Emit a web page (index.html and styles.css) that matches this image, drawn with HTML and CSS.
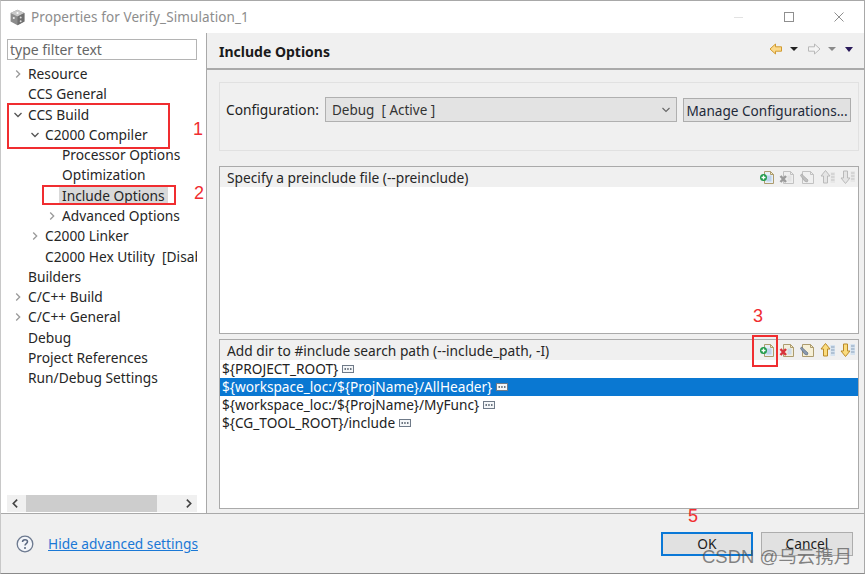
FILE: index.html
```html
<!DOCTYPE html>
<html lang="en">
<head>
<meta charset="utf-8">
<title>Properties for Verify_Simulation_1</title>
<link rel="stylesheet" href="styles.css">
</head>
<body>
<svg class="defs" width="0" height="0" aria-hidden="true">
  <symbol id="add" viewBox="0 0 16 16"><path d="M5.500 2.500h6l3 3v9h-9z" fill="#e6eef6" stroke="#ad9c6e"/><path d="M11.500 2.500v3h3z" fill="#f8eec8" stroke="#ad9c6e"/><path d="M7.500 6.500h5v6h-5z" fill="#bcd3ea"/><circle cx="4.500" cy="8.500" r="3.500" fill="#1f9a4a"/><path d="M2.500 8.500h4M4.500 6.500v4" stroke="#fff" stroke-width="1.300"/></symbol>
  <symbol id="del" viewBox="0 0 16 16"><path d="M4.500 2.500h7l3 3v9h-10z" fill="#f2eedd" stroke="#ad9c6e"/><path d="M11.500 2.500v3h3z" fill="#f8eec8" stroke="#ad9c6e"/><path d="M8.500 6.500h4v6h-4z" fill="#cfdcea"/><path d="M1.500 7l5.500 6M7 7l-5.500 6" stroke="#d8343c" stroke-width="2.500"/></symbol>
  <symbol id="edit" viewBox="0 0 16 16"><path d="M3.500 2.500h8l3 3v9h-11z" fill="#f6f0d8" stroke="#ad9c6e"/><path d="M11.500 2.500v3h3z" fill="#f8eec8" stroke="#ad9c6e"/><path d="M2.500 5l6.500 6-.8 2-2.500-.8L1.500 6.500z" fill="#8a9ab0" stroke="#4e5e75" stroke-width=".6"/></symbol>
  <symbol id="up" viewBox="0 0 16 16"><path d="M5.500 1.500l4.500 5.500H7.500v7h-4V7H1z" fill="#fbdc7e" stroke="#b98a2a"/><path d="M10.500 3h4.500v11h-4.500z" fill="#d5e2ef"/><path d="M11 5h3.500M11 8h3.500M11 11h3.500" stroke="#8aa0b8"/></symbol>
  <symbol id="down" viewBox="0 0 16 16"><path d="M5.500 14.500L10 9H7.500V2h-4v7H1z" fill="#fbdc7e" stroke="#b98a2a"/><path d="M10.500 2h4.500v11h-4.500z" fill="#d5e2ef"/><path d="M11 4h3.500M11 7h3.500M11 10h3.500" stroke="#8aa0b8"/></symbol>
  <symbol id="opt" viewBox="0 0 12 8"><rect x=".5" y=".5" width="11" height="7" fill="#f4f6f8" stroke="#6f7a88"/><path d="M2.500 4h1.500M5.200 4h1.500M8 4h1.500" stroke="#3f4b58" stroke-width="1.400"/></symbol>
  <symbol id="open" viewBox="0 0 10 10"><path d="M1.500 3l3.500 3.500L8.500 3" fill="none" stroke="#555" stroke-width="1.300"/></symbol>
  <symbol id="closed" viewBox="0 0 10 10"><path d="M3.200 1.500L6.700 5 3.200 8.500" fill="none" stroke="#9a9a9a" stroke-width="1.300"/></symbol>
</svg>

<div class="window">
  <header class="titlebar">
    <svg class="app-icon" viewBox="0 0 16 16" aria-hidden="true"><path d="M8 .8l6.500 3v8L8 15.200 1.500 11.800v-8z" fill="#8c8c8c"/><path d="M8 .8l6.500 3L8 7 1.500 3.800z" fill="#c9c9c9"/><path d="M8 7v8.200l6.500-3.400v-8z" fill="#6f6f6f"/><circle cx="8" cy="3.800" r="1" fill="#fff"/><circle cx="4.500" cy="8.500" r="1" fill="#eee"/><circle cx="11" cy="8" r=".9" fill="#ddd"/><circle cx="11" cy="11.500" r=".9" fill="#ddd"/></svg>
    <span class="title">Properties for Verify_Simulation_1</span>
    <div class="win-controls">
      <span class="win-min"></span>
      <span class="win-max"></span>
      <svg class="win-close" viewBox="0 0 10 10" aria-hidden="true"><path d="M.5.500l9 9M9.500.500l-9 9" stroke="#8f8f8f" fill="none"/></svg>
    </div>
  </header>

  <main class="main">
    <aside class="sidebar">
      <input class="filter" type="text" placeholder="type filter text">
      <ul class="tree">
        <li class="row"><svg class="tw"><use href="#closed"/></svg>Resource</li>
        <li class="row"><span class="tw"></span>CCS General</li>
        <li class="row"><svg class="tw"><use href="#open"/></svg>CCS Build</li>
        <li class="row l1"><svg class="tw"><use href="#open"/></svg>C2000 Compiler</li>
        <li class="row l2"><span class="tw"></span>Processor Options</li>
        <li class="row l2"><span class="tw"></span>Optimization</li>
        <li class="row l2"><span class="tw"></span><span class="current">Include Options</span></li>
        <li class="row l2"><svg class="tw"><use href="#closed"/></svg>Advanced Options</li>
        <li class="row l1"><svg class="tw"><use href="#closed"/></svg>C2000 Linker</li>
        <li class="row l1"><span class="tw"></span>C2000 Hex Utility&nbsp; [Disabled]</li>
        <li class="row"><span class="tw"></span>Builders</li>
        <li class="row"><svg class="tw"><use href="#closed"/></svg>C/C++ Build</li>
        <li class="row"><svg class="tw"><use href="#closed"/></svg>C/C++ General</li>
        <li class="row"><span class="tw"></span>Debug</li>
        <li class="row"><span class="tw"></span>Project References</li>
        <li class="row"><span class="tw"></span>Run/Debug Settings</li>
      </ul>
      <div class="hscroll">
        <svg class="hs-arrow" viewBox="0 0 10 10" aria-hidden="true"><path d="M6.500 1.500L3 5l3.500 3.500" fill="none" stroke="#444" stroke-width="1.500"/></svg>
        <div class="hs-track"><div class="hs-thumb"></div></div>
        <svg class="hs-arrow" viewBox="0 0 10 10" aria-hidden="true"><path d="M3.500 1.500L7 5 3.500 8.500" fill="none" stroke="#444" stroke-width="1.500"/></svg>
      </div>
    </aside>

    <section class="content">
      <div class="page-head">
        <h1 class="page-title">Include Options</h1>
        <div class="nav">
          <svg class="nav-arrow" viewBox="0 0 14 12" aria-hidden="true"><path d="M6.500 1L1 6l5.500 5V8.200h6V3.800h-6z" fill="#fbd98a" stroke="#d09a30"/></svg>
          <span class="tri"></span>
          <svg class="nav-arrow next" viewBox="0 0 14 12" aria-hidden="true"><path d="M7.500 1l5.500 5-5.500 5V8.200h-6V3.800h6z" fill="#f4f4f4" stroke="#b8b8b8"/></svg>
          <span class="tri dim"></span>
          <span class="tri menu"></span>
        </div>
      </div>

      <div class="body">
        <div class="config">
          <span class="config-label">Configuration:</span>
          <div class="select"><span>Debug&nbsp; [ Active ]</span><svg class="select-arrow" viewBox="0 0 10 10" aria-hidden="true"><path d="M1.500 3l3.500 3.500L8.500 3" fill="none" stroke="#666" stroke-width="1.100"/></svg></div>
          <button class="btn manage" type="button">Manage Configurations...</button>
        </div>

        <div class="panel first">
          <div class="panel-head">
            <span class="panel-title">Specify a preinclude file (--preinclude)</span>
            <div class="tools off">
              <svg class="tool on"><use href="#add"/></svg>
              <svg class="tool"><use href="#del"/></svg>
              <svg class="tool"><use href="#edit"/></svg>
              <svg class="tool"><use href="#up"/></svg>
              <svg class="tool"><use href="#down"/></svg>
            </div>
          </div>
          <div class="panel-body"></div>
        </div>

        <div class="panel second">
          <div class="panel-head">
            <span class="panel-title">Add dir to #include search path (--include_path, -I)</span>
            <div class="tools">
              <svg class="tool"><use href="#add"/></svg>
              <svg class="tool"><use href="#del"/></svg>
              <svg class="tool"><use href="#edit"/></svg>
              <svg class="tool"><use href="#up"/></svg>
              <svg class="tool"><use href="#down"/></svg>
            </div>
          </div>
          <ul class="panel-body paths">
            <li class="path">${PROJECT_ROOT}<svg class="opt"><use href="#opt"/></svg></li>
            <li class="path selected">${workspace_loc:/${ProjName}/AllHeader}<svg class="opt"><use href="#opt"/></svg></li>
            <li class="path">${workspace_loc:/${ProjName}/MyFunc}<svg class="opt"><use href="#opt"/></svg></li>
            <li class="path">${CG_TOOL_ROOT}/include<svg class="opt"><use href="#opt"/></svg></li>
          </ul>
        </div>
      </div>
    </section>
  </main>

  <footer class="footer">
    <svg class="help" viewBox="0 0 18 18" aria-hidden="true"><circle cx="9" cy="9" r="7.800" fill="#f4f6fa" stroke="#6d7a90" stroke-width="1.300"/><path d="M6.500 7c0-1.500 1.100-2.300 2.500-2.300s2.500.8 2.500 2.100c0 1.800-2.500 1.800-2.500 3.700" fill="none" stroke="#5a6880" stroke-width="1.500"/><circle cx="9" cy="13" r="1" fill="#5a6880"/></svg>
    <a class="link" href="#">Hide advanced settings</a>
    <div class="actions">
      <button class="btn action default" type="button">OK</button>
      <button class="btn action" type="button">Cancel</button>
    </div>
  </footer>

  <div class="mark box-1"></div>
  <div class="mark box-2"></div>
  <div class="mark box-3"></div>
  <span class="num n1">1</span>
  <span class="num n2">2</span>
  <span class="num n3">3</span>
  <span class="num n5">5</span>
  <span class="watermark">CSDN @乌云携月</span>
</div>
</body>
</html>
```

FILE: styles.css
```css
* { box-sizing: border-box; }
html, body { margin: 0; padding: 0; }
body {
  width: 865px;
  height: 574px;
  overflow: hidden;
  background: #fff;
  font-family: "Noto Sans", "Open Sans", "Noto Sans CJK SC", sans-serif;
  font-size: 13.75px;
  color: #222;
}
.defs { position: absolute; }
ul { list-style: none; margin: 0; padding: 0; }

.window {
  position: relative;
  width: 865px;
  height: 574px;
  display: flex;
  flex-direction: column;
  border-top: 1px solid #a8a8a8;
  border-right: 1px solid #a8a8a8;
  border-left: 1px solid #c8c8c8;
  border-bottom: 1px solid #8a8a8a;
}

.titlebar { height: 32px; display: flex; align-items: center; padding-left: 8px; flex: none; }
.app-icon { width: 17px; height: 17px; margin-right: 5px; }
.title { color: #8d8d8d; font-size: 13.5px; letter-spacing: .1px; }
.win-controls { margin-left: auto; display: flex; align-items: center; }
.win-min { width: 9px; height: 1px; background: #e2e2e2; margin-right: 41px; }
.win-max { width: 10px; height: 10px; border: 1px solid #8f8f8f; margin-right: 40px; }
.win-close { width: 10px; height: 10px; margin-right: 20px; }

.main { flex: 1; display: flex; min-height: 0; }

.sidebar {
  width: 206px;
  flex: none;
  padding: 6px 8px 1px 6px;
  border-right: 1px solid #a9a9a9;
  display: flex;
  flex-direction: column;
}
.filter {
  width: 190px;
  height: 21px;
  flex: none;
  border: 1px solid #b4b4b4;
  padding: 0 2px;
  font: inherit;
  font-size: 14px;
  outline: none;
}
.filter::placeholder { color: #666; opacity: 1; }

.tree { flex: 1; width: 190px; overflow: hidden; padding-top: 4px; min-height: 0; }
.row { height: 20.27px; line-height: 20px; white-space: nowrap; display: flex; align-items: center; padding-left: 6px; color: #262626; }
.l1 { padding-left: 23px; }
.l2 { padding-left: 40px; }
.tw { width: 10px; height: 10px; margin-right: 5px; flex: none; }
.current { background: #d9d9d9; padding: 0 3px; margin-left: -3px; height: 19px; line-height: 19px; }

.hscroll { height: 17px; width: 190px; flex: none; display: flex; align-items: center; background: #f0f0f0; }
.hs-arrow { width: 17px; height: 11px; flex: none; }
.hs-track { flex: 1; height: 17px; }
.hs-thumb { width: 131px; height: 17px; background: #cdcdcd; margin-left: 2px; }

.content { flex: 1; min-width: 0; display: flex; flex-direction: column; background: #fff; }
.page-head {
  height: 37px;
  flex: none;
  display: flex;
  align-items: center;
  padding: 1px 11px 0 12px;
  background: #f0f0f0;
  border-bottom: 2px solid #aaa;
}
.page-title { font-size: 14px; font-weight: 700; margin: 0; color: #1a1a1a; }
.nav { margin-left: auto; display: flex; align-items: center; padding-bottom: 4px; }
.nav-arrow { width: 14px; height: 12px; margin-right: 7px; }
.nav-arrow.next { margin-left: 9px; }
.tri { width: 0; height: 0; border-left: 4px solid transparent; border-right: 4px solid transparent; border-top: 4px solid #222; }
.tri.dim { border-top-color: #8a8a8a; margin-right: 9px; }
.tri.menu { border-left-width: 4.5px; border-right-width: 4.5px; border-top: 5px solid #2a1a5a; }

.body { flex: 1; min-height: 0; display: flex; flex-direction: column; padding: 12px 5px 5px 12px; background: #f0f0f0; }

.config {
  height: 69px;
  flex: none;
  display: flex;
  align-items: flex-start;
  padding: 14px 7px 0 6px;
  border: 1px solid #e1e1e1;
}
.config-label { width: 99px; flex: none; line-height: 25px; }
.select {
  width: 352px;
  height: 25px;
  flex: none;
  display: flex;
  align-items: center;
  justify-content: space-between;
  padding: 0 5px 0 6px;
  background: #e3e3e3;
  border: 1px solid #b0b0b0;
  color: #333;
  font-size: 13.5px;
}
.select-arrow { width: 10px; height: 10px; }
.btn { font: inherit; color: #1e2a3a; background: #e1e1e1; border: 1px solid #adadad; padding: 0; }
.manage { width: 168px; height: 24px; margin: 1px 0 0 6px; white-space: nowrap; font-size: 13.6px; }

.panel { display: flex; flex-direction: column; border: 1px solid #aaa; flex: none; background: #fff; }
.first { height: 168px; margin-top: 15px; }
.second { height: 170px; margin-top: 5px; }
.panel-head { height: 20px; flex: none; display: flex; align-items: center; padding: 0 2px 0 7px; background: #f0f0f0; }
.panel-title { color: #262626; }
.tools { margin-left: auto; display: flex; gap: 4.3px; }
.tool { width: 16px; height: 16px; }
.tools.off .tool:not(.on) { filter: grayscale(1) opacity(.55); }
.panel-body { flex: 1; background: #fff; min-height: 0; }
.path { height: 18px; line-height: 18px; padding-left: 2px; display: flex; align-items: center; font-size: 13.66px; white-space: nowrap; color: #222; }
.path.selected { background: #0a78d2; color: #fff; }
.opt { width: 12px; height: 8px; margin-left: 4px; }

.footer {
  height: 60px;
  flex: none;
  display: flex;
  align-items: center;
  padding: 0 11px 0 15px;
  background: #f0f0f0;
  border-top: 1px solid #a9a9a9;
}
.help { width: 18px; height: 18px; margin-right: 14px; }
.link { color: #1a78d6; text-decoration: underline; font-size: 13.7px; }
.actions { margin-left: auto; display: flex; gap: 8px; }
.action { width: 92px; height: 24px; color: #1c1c1c; }
.default { border: 2px solid #0a78d7; }

.mark { position: absolute; border: 2px solid #f02d30; pointer-events: none; }
.box-1 { left: 6px; top: 102px; width: 163px; height: 46px; }
.box-2 { left: 41px; top: 184px; width: 134px; height: 20px; }
.box-3 { left: 751px; top: 334px; width: 26px; height: 32px; }
.num { position: absolute; color: #f02d30; font-size: 18px; line-height: 20px; font-family: "Liberation Sans", sans-serif; }
.n1 { left: 192px; top: 118px; }
.n2 { left: 193px; top: 182px; }
.n3 { left: 752px; top: 305px; }
.n5 { left: 687px; top: 505px; }
.watermark {
  position: absolute;
  left: 701px;
  top: 545px;
  font-size: 18.5px;
  line-height: 22px;
  color: rgba(80, 80, 80, .7);
  font-family: "Liberation Sans", "Noto Sans CJK SC", sans-serif;
  white-space: nowrap;
}
```
